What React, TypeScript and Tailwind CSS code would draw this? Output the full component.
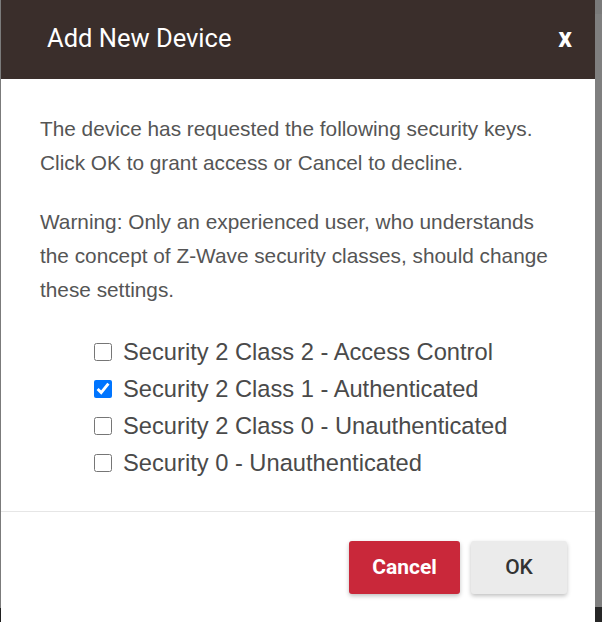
import React from "react";

const keys = [
  { label: "Security 2 Class 2 - Access Control", checked: false },
  { label: "Security 2 Class 1 - Authenticated", checked: true },
  { label: "Security 2 Class 0 - Unauthenticated", checked: false },
  { label: "Security 0 - Unauthenticated", checked: false },
];

export default function App() {
  return (
    <div className="flex w-[602px] h-[622px] overflow-hidden bg-[#7f7f7f]">
      {/* left edge of the backdrop */}
      <div className="w-[1px] flex flex-col">
        <div className="flex-1 bg-[#7b7b7b]"></div>
        <div className="h-[14px] bg-[#1f1f1f]"></div>
      </div>

      <div className="w-[594px] h-[640px] bg-white flex flex-col shrink-0">
        <div className="h-[79px] bg-[#3a2e2b] flex items-center justify-between pl-[46px] pr-[23px]">
          <div className="text-white text-[25.5px] font-['Roboto',sans-serif] pb-[2px]">
            Add New Device
          </div>
          <button className="text-white text-[27px] font-bold font-['Roboto',sans-serif] leading-none pb-[2px]">
            x
          </button>
        </div>

        <div className="pl-[39px] pr-[30px] pt-[33px] font-['Liberation_Sans',Arial,sans-serif] text-[#555] text-[20.8px] leading-[34px]">
          <p>
            The device has requested the following security keys.
            <br />
            Click OK to grant access or Cancel to decline.
          </p>
          <p className="mt-[25px]">
            Warning: Only an experienced user, who understands the concept of Z-Wave security classes, should change
            these settings.
          </p>

          <div className="mt-[26px] ml-[54px] flex flex-col">
            {keys.map((k) => (
              <label key={k.label} className="flex items-center h-[37px] gap-[11px] text-[23.7px] text-[#4a4a4a]">
                <input type="checkbox" defaultChecked={k.checked} className="w-[18px] h-[18px] m-0" />
                <span>{k.label}</span>
              </label>
            ))}
          </div>
        </div>

        <div className="mt-[30px] border-t border-[#e6e6e6] flex justify-end gap-[11px] pt-[29px] pr-[28px]">
          <button className="w-[111px] h-[53px] rounded-[3px] bg-[#c9283a] text-white font-bold text-[21px] font-['Roboto',sans-serif] shadow-[0_2px_4px_rgba(0,0,0,0.25)]">
            Cancel
          </button>
          <button className="w-[96px] h-[53px] rounded-[3px] bg-[#ebebeb] text-[#333] font-medium text-[21px] font-['Roboto',sans-serif] shadow-[0_2px_4px_rgba(0,0,0,0.25)]">
            OK
          </button>
        </div>
      </div>

      {/* right edge of the backdrop */}
      <div className="flex-1 flex flex-col">
        <div className="h-[14px] bg-[#7a7a7a]"></div>
        <div className="flex-1 bg-[#7f7f7f]"></div>
        <div className="h-[15px] bg-[#262626]"></div>
      </div>
    </div>
  );
}
